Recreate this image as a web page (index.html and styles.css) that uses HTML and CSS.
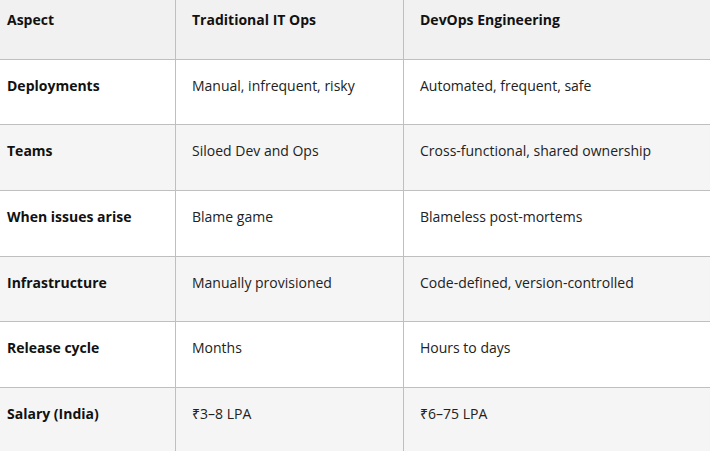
FILE: index.html
```html
<!DOCTYPE html>
<html lang="en">
<head>
<meta charset="utf-8">
<title>Traditional IT Ops vs DevOps Engineering</title>
<link rel="stylesheet" href="styles.css">
</head>
<body>
<table class="compare">
  <colgroup>
    <col class="c1"><col class="c2"><col class="c3">
  </colgroup>
  <thead>
    <tr><th>Aspect</th><th>Traditional IT Ops</th><th>DevOps Engineering</th></tr>
  </thead>
  <tbody>
    <tr><td class="label">Deployments</td><td>Manual, infrequent, risky</td><td>Automated, frequent, safe</td></tr>
    <tr><td class="label">Teams</td><td>Siloed Dev and Ops</td><td>Cross-functional, shared ownership</td></tr>
    <tr><td class="label">When issues arise</td><td>Blame game</td><td>Blameless post-mortems</td></tr>
    <tr><td class="label">Infrastructure</td><td>Manually provisioned</td><td>Code-defined, version-controlled</td></tr>
    <tr><td class="label">Release cycle</td><td>Months</td><td>Hours to days</td></tr>
    <tr><td class="label">Salary (India)</td><td>₹3–8 LPA</td><td>₹6–75 LPA</td></tr>
  </tbody>
</table>
</body>
</html>
```
FILE: styles.css
```css
html, body {
  margin: 0;
  padding: 0;
  background: #ffffff;
  overflow: hidden;
}
body {
  font-family: "Open Sans", "Noto Sans", sans-serif;
  font-size: 14px;
  color: #222222;
}
.compare {
  border-collapse: collapse;
  table-layout: fixed;
  width: 745px;
  margin: -7px 0 0 -10px;
}
.c1 { width: 185px; }
.c2 { width: 228px; }
.c3 { width: 332px; }
.compare th,
.compare td {
  border: 1px solid #bfbfbf;
  padding: 15px 16px 0 16px;
  height: 65.7px;
  box-sizing: border-box;
  line-height: 22.4px;
  vertical-align: top;
  text-align: left;
}
.compare th {
  background: #f1f1f1;
  font-weight: 700;
  color: #111111;
}
.compare td.label {
  font-weight: 700;
  color: #111111;
}
.compare tbody tr:nth-child(even) td {
  background: #f5f5f5;
}
```
